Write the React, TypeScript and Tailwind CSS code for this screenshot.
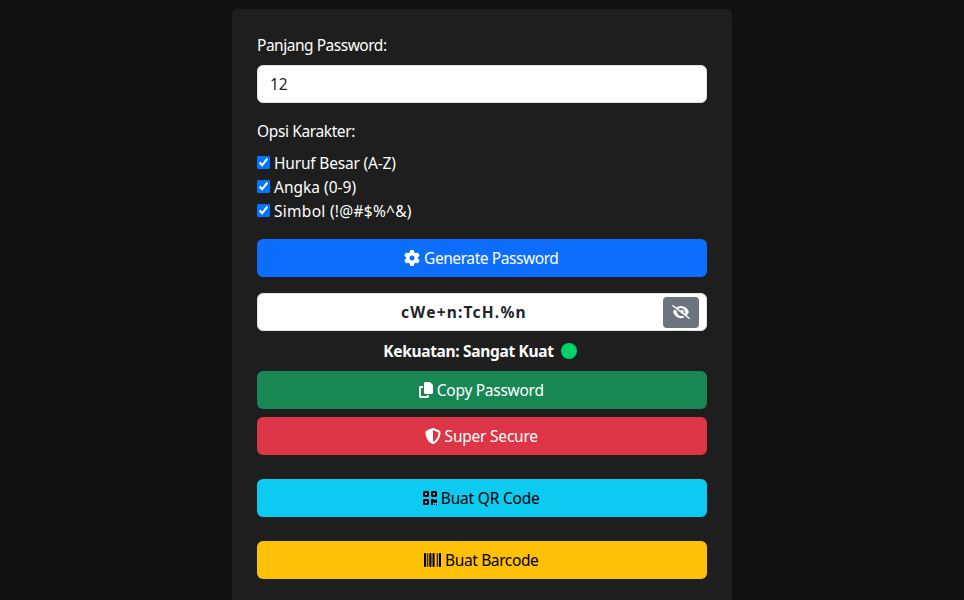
import { FaGear, FaEyeSlash, FaCopy, FaShieldHalved, FaQrcode, FaBarcode } from "react-icons/fa6";
import type { ReactNode } from "react";

function Button({ className, icon, children }: { className: string; icon: ReactNode; children: ReactNode }) {
  return (
    <button className={`flex h-[38px] w-full items-center justify-center gap-1 rounded-md pr-[1.5px] whitespace-nowrap ${className}`}>
      {icon}
      {children}
    </button>
  );
}

function Check({ children }: { children: ReactNode }) {
  return (
    <label className="flex h-6 items-center gap-1">
      <input type="checkbox" defaultChecked className="mb-[2px] size-[13px] accent-[#0075ff]" />
      {children}
    </label>
  );
}

export default function App() {
  return (
    <main className="flex h-[600px] justify-center overflow-hidden bg-[#121212] pt-[9px] font-['Noto_Sans',sans-serif] text-[15.5px] leading-6 text-white">
      <section className="h-[700px] w-[500px] rounded-md bg-[#1e1e1e] px-[25px] pt-6 shadow-[0_4px_8px_rgba(0,0,0,0.15)]">
        <div className="tracking-[-0.48px]">Panjang Password:</div>
        <input defaultValue="12" className="mt-2 block h-[38px] w-full rounded-md border border-[#dee2e6] bg-white px-3 tracking-[-0.2px] text-[#212529]" />
        <div className="mt-4 mb-2 tracking-[-0.38px]">Opsi Karakter:</div>
        <div>
          <Check><span className="tracking-[-0.18px]">Huruf Besar (A-Z)</span></Check>
          <Check><span>Angka (0-9)</span></Check>
          <Check><span className="tracking-[0.28px]">Simbol (!@#$%^&amp;)</span></Check>
        </div>
        <Button className="mt-4 bg-[#0d6efd]" icon={<FaGear className="size-4" />}><span className="tracking-[-0.42px]">Generate Password</span></Button>
        <div className="mt-4 flex h-[38px] items-center rounded-md border border-[#dee2e6] bg-white pr-[7px] text-[#212529]">
          <span className="flex-1 pl-[7px] text-center font-bold tracking-[1.2px]">cWe+n:TcH.%n</span>
          <button className="flex h-[31px] w-9 items-center justify-center rounded bg-[#6c757d] text-white">
            <FaEyeSlash className="h-[14px] w-[18px]" />
          </button>
        </div>
        <div className="my-2 flex h-6 items-center justify-center gap-[7px] pr-1 font-bold">
          <span className="tracking-[-0.32px]">Kekuatan: Sangat Kuat</span>
          <i className="size-4 rounded-full bg-[#00d26a]" />
        </div>
        <Button className="bg-[#198754]" icon={<FaCopy className="h-4 w-[14px]" />}><span className="tracking-[-0.28px]">Copy Password</span></Button>
        <Button className="mt-2 bg-[#dc3545]" icon={<FaShieldHalved className="size-4" />}><span className="tracking-[-0.22px]">Super Secure</span></Button>
        <Button className="mt-6 bg-[#0dcaf0] text-black" icon={<FaQrcode className="h-4 w-[14px]" />}><span className="tracking-[-0.2px]">Buat QR Code</span></Button>
        <Button className="mt-6 bg-[#ffc107] text-black" icon={<FaBarcode className="h-4 w-[17px]" preserveAspectRatio="none" />}><span className="tracking-[-0.38px]">Buat Barcode</span></Button>
      </section>
    </main>
  );
}
